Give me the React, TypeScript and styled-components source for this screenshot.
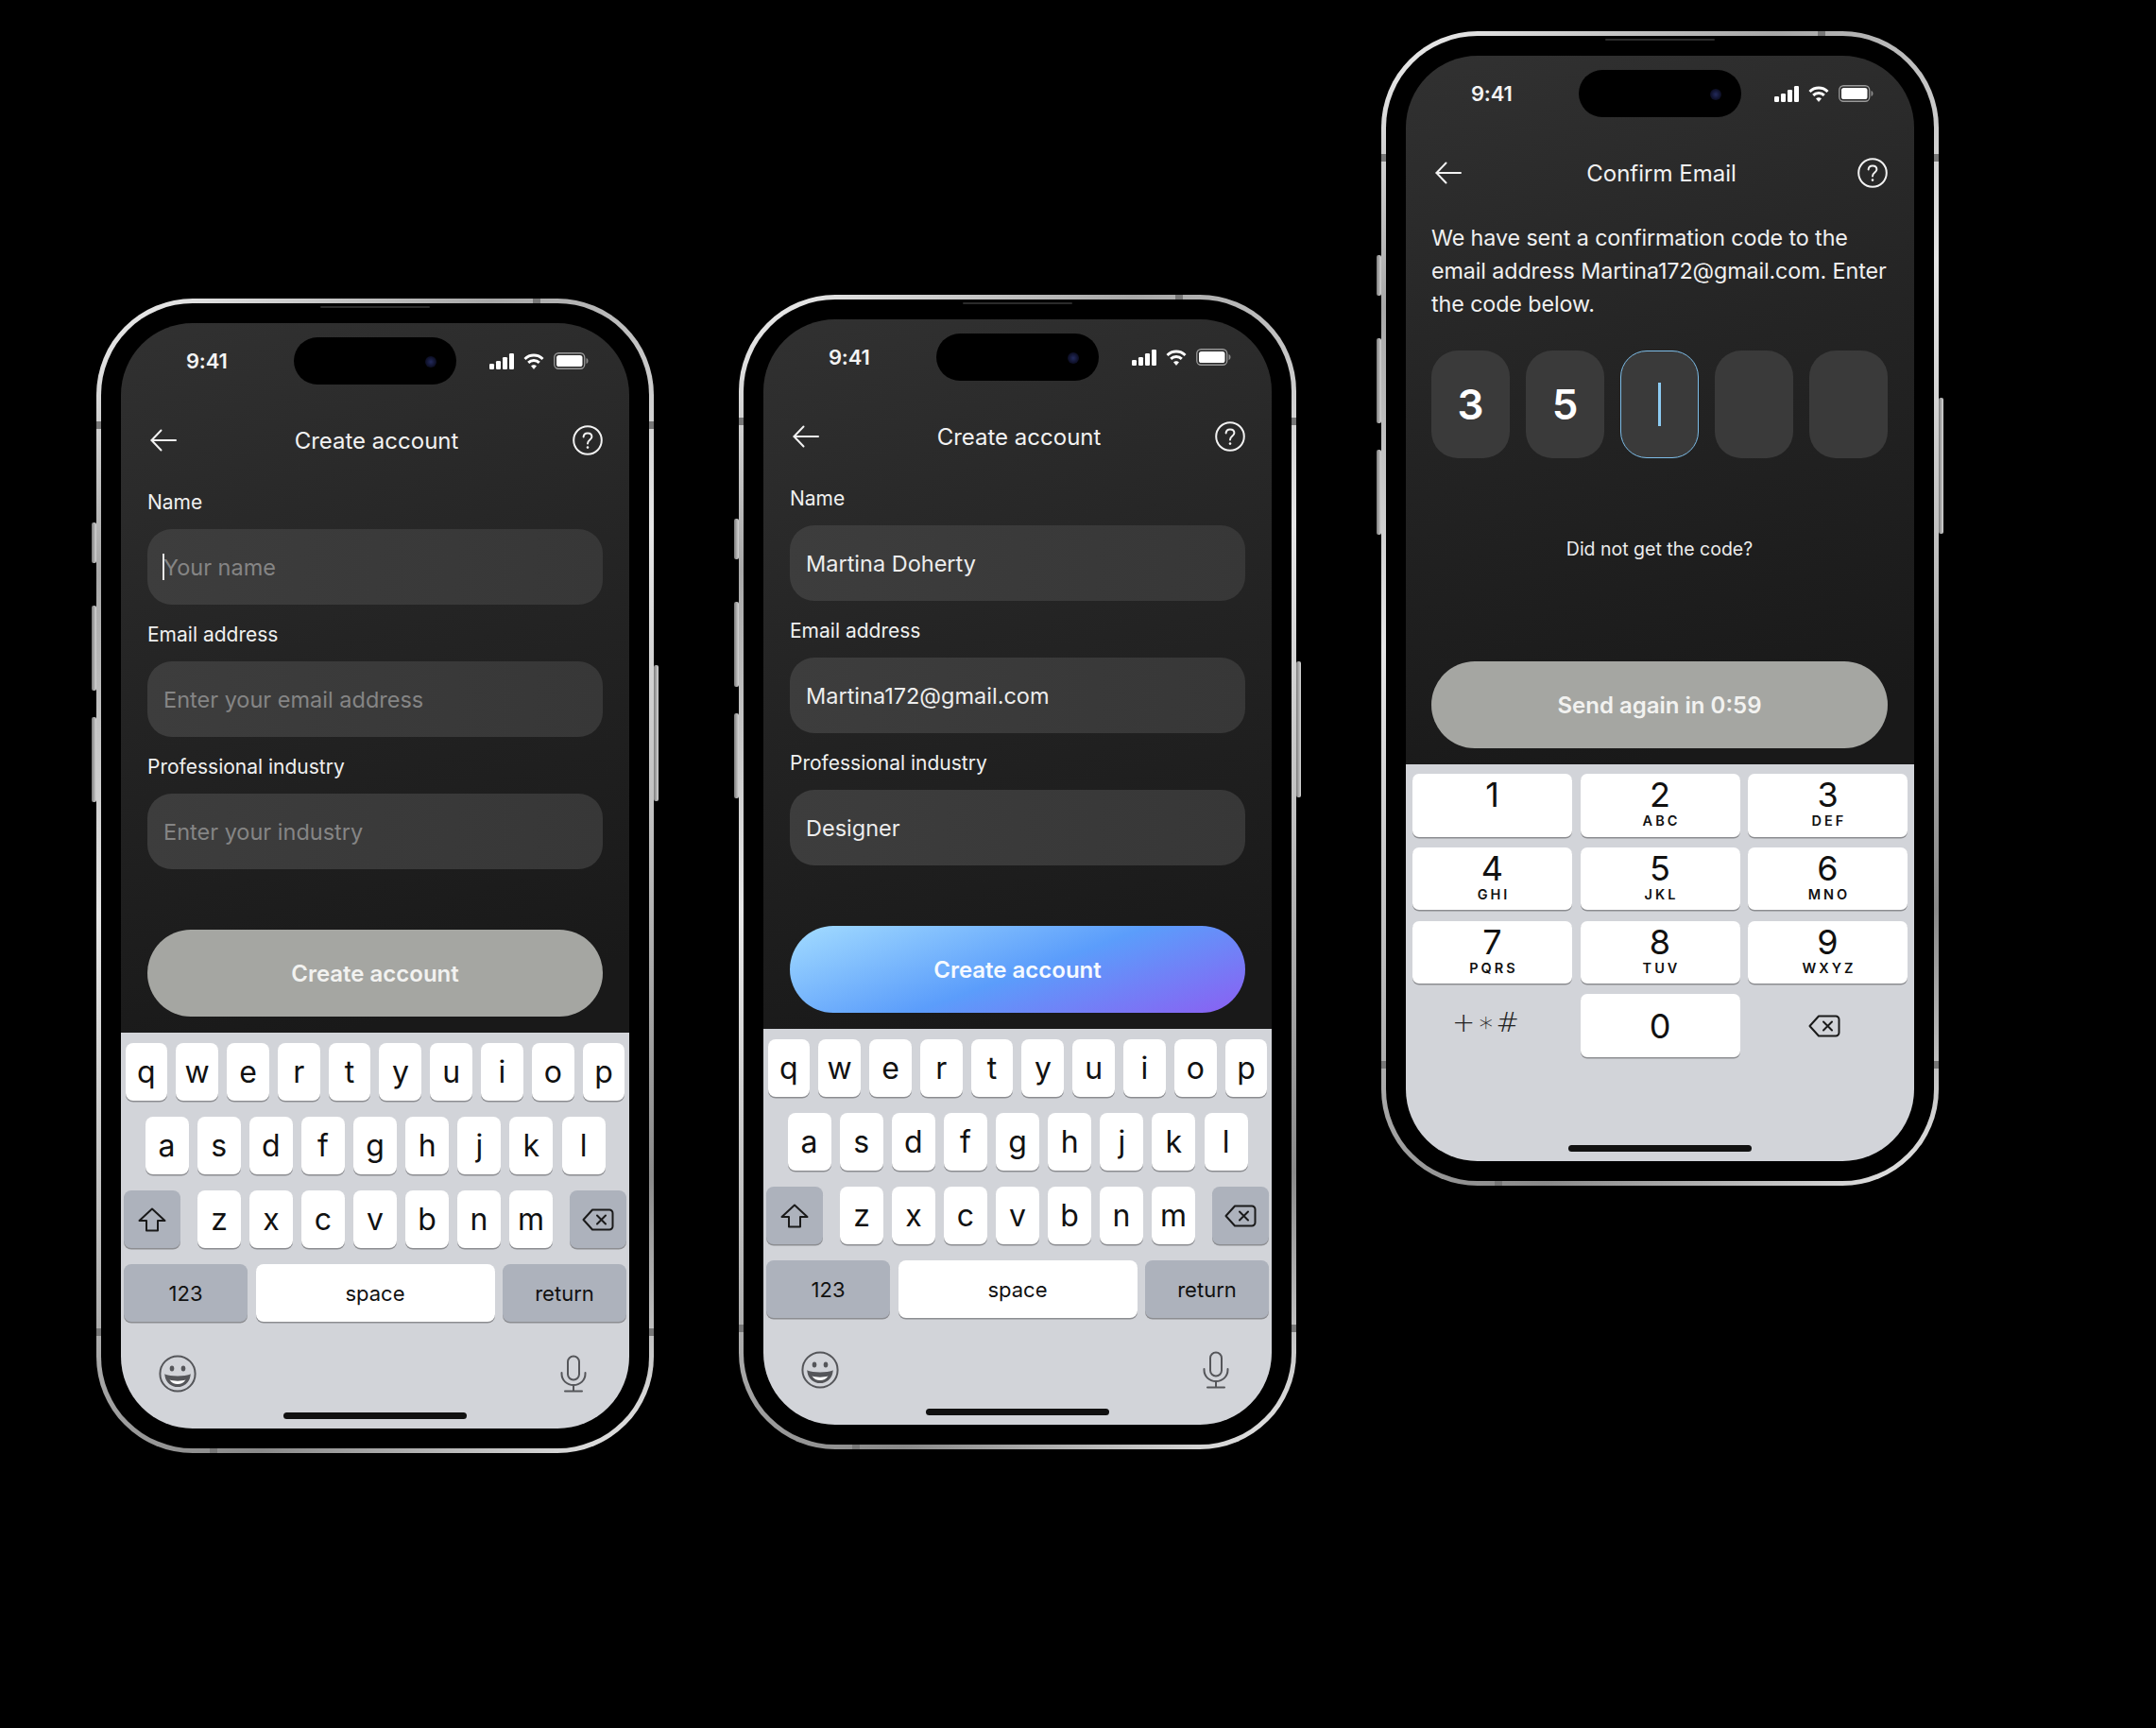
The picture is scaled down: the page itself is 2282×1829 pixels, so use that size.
import { createGlobalStyle } from 'styled-components'
import styled from 'styled-components'

import type { FC, ReactNode } from 'react'

const GlobalStyle = createGlobalStyle`
  html, body {
    margin: 0;
    padding: 0;
    background: #000;
  }
  body {
    width: 2282px;
    height: 1829px;
    overflow: hidden;
    font-family: Inter, 'Liberation Sans', sans-serif;
  }
  * {
    box-sizing: border-box;
  }
`

const Stage = styled.div`
  display: flex;
  align-items: flex-start;
  gap: 90px;
  width: 2282px;
  height: 1829px;
  padding-left: 102px;
  background: #000;
`

const Frame = styled.div<{ $top: number }>`
  position: relative;
  flex: none;
  width: 590px;
  height: 1222px;
  margin-top: ${(p) => p.$top}px;
  padding: 5px;
  border-radius: 102px;
  background: linear-gradient(
    145deg,
    #f2f2f2 0%,
    #a8a8a8 18%,
    #e6e6e6 40%,
    #bdbdbd 60%,
    #8a8a8a 82%,
    #ececec 100%
  );
`

const Bezel = styled.div`
  height: 100%;
  padding: 21px 21px 21px;
  border-radius: 97px;
  background: #000;
`

const Screen = styled.div`
  display: flex;
  flex-direction: column;
  height: 1170px;
  overflow: hidden;
  border-radius: 76px;
  color: #fff;
  background: linear-gradient(165deg, #313131 0%, #242424 30%, #191919 62%, #191919 100%);
`

const SideButton = styled.div<{ $side: 'left' | 'right'; $y: number; $h: number }>`
  position: absolute;
  ${(p) => p.$side}: -5px;
  top: ${(p) => p.$y}px;
  width: 5px;
  height: ${(p) => p.$h}px;
  border-radius: 2px;
  background: linear-gradient(90deg, #7c7c7c, #d6d6d6);
`

const Speaker = styled.div`
  position: absolute;
  top: 8px;
  left: 237px;
  width: 116px;
  height: 2px;
  border-radius: 1px;
  background: #2b2b2b;
`

const Band = styled.div<{ $x: number; $y: number; $wide?: boolean }>`
  position: absolute;
  left: ${(p) => p.$x}px;
  top: ${(p) => p.$y}px;
  width: ${(p) => (p.$wide ? 5 : 8)}px;
  height: ${(p) => (p.$wide ? 8 : 5)}px;
  background: #777;
`

const StatusBar = styled.div`
  display: grid;
  grid-template-columns: 183px 172px 1fr;
  flex: none;
  height: 50px;
  margin-top: 15px;
`

const Time = styled.div`
  align-self: center;
  padding-left: 69px;
  font-size: 22px;
  font-weight: 600;
  letter-spacing: -0.2px;
  color: #f4f4f4;
`

const Island = styled.div`
  position: relative;
  border-radius: 25px;
  background: #000;
`

const Lens = styled.div`
  position: absolute;
  top: 20px;
  left: 139px;
  width: 12px;
  height: 12px;
  border-radius: 50%;
  background: radial-gradient(circle, #232a5c 0%, #10132e 55%, #05060f 100%);
`

const StatusIcons = styled.div`
  display: flex;
  align-items: center;
  gap: 10px;
  padding-left: 35px;
`

const Header = styled.div`
  display: grid;
  grid-template-columns: 1fr auto 1fr;
  align-items: center;
  flex: none;
  height: 60px;
  margin-top: 29px;
  padding: 0 28px 0 31px;
`

const HelpWrap = styled.div`
  display: flex;
  justify-content: flex-end;
`

const Title = styled.div`
  font-size: 24px;
  font-weight: 400;
  color: #f2f2f2;
`

const Form = styled.div`
  display: flex;
  flex: 1;
  flex-direction: column;
  padding: 22px 28px 17px;
`

const Label = styled.div`
  height: 28px;
  margin-bottom: 14px;
  font-size: 21px;
  line-height: 28px;
  color: #f0f0f0;
`

const Field = styled.div<{ $filled?: boolean }>`
  position: relative;
  display: flex;
  align-items: center;
  height: 80px;
  margin-bottom: 18px;
  padding-left: 17px;
  border-radius: 26px;
  font-size: 23.5px;
  color: ${(p) => (p.$filled ? '#ededed' : '#858585')};
  background: linear-gradient(95deg, #3d3d3d 0%, #373737 100%);
`

const Caret = styled.span`
  position: absolute;
  left: 16px;
  top: 26px;
  width: 2px;
  height: 28px;
  background: #e8e8e8;
`

const Cta = styled.div<{ $active?: boolean }>`
  display: flex;
  flex: none;
  align-items: center;
  justify-content: center;
  height: 92px;
  margin-top: auto;
  border-radius: 46px;
  font-size: 24px;
  font-weight: 600;
  color: ${(p) => (p.$active ? '#f6faff' : '#f2f2f0')};
  background: ${(p) =>
    p.$active
      ? 'linear-gradient(160deg, #a3dcff 0%, #5b9dfb 52%, #8b5ff2 100%)'
      : '#a5a6a2'};
`

const Intro = styled.p`
  margin: 21px 28px 32px 27px;
  font-size: 23.3px;
  line-height: 35px;
  letter-spacing: -0.1px;
  color: #f0f0f0;
`

const CodeRow = styled.div`
  display: grid;
  grid-template-columns: repeat(5, 83px);
  justify-content: space-between;
  flex: none;
  padding: 0 28px 0 27px;
`

const CodeBox = styled.div<{ $active?: boolean }>`
  display: flex;
  align-items: center;
  justify-content: center;
  height: 114px;
  border: 1.5px solid ${(p) => (p.$active ? '#7dbde8' : 'transparent')};
  border-radius: 28px;
  font-size: 44px;
  font-weight: 600;
  color: #fff;
  background: #3a3a3a;
`

const CodeCaret = styled.span`
  width: 3px;
  height: 46px;
  background: #8ccbf2;
`

const Footer = styled.div`
  display: flex;
  flex: 1;
  flex-direction: column;
  padding: 0 28px 17px 27px;
`

const Hint = styled.div`
  margin-top: auto;
  margin-bottom: 23px;
  font-size: 19.5px;
  line-height: 28px;
  text-align: center;
  color: #ececec;
`

const Keyboard = styled.div<{ $h: number }>`
  display: flex;
  flex: none;
  flex-direction: column;
  height: ${(p) => p.$h}px;
  padding-top: 11px;
  background: #d2d4d9;
`

const KeyRow = styled.div<{ $pad?: number }>`
  display: flex;
  justify-content: space-between;
  height: 61px;
  margin-bottom: 17px;
  padding: 0 ${(p) => p.$pad ?? 3}px;
`

const LetterGroup = styled.div`
  display: flex;
  gap: 9px;
`

const Key = styled.div<{ $w?: number; $muted?: boolean; $small?: boolean }>`
  display: flex;
  flex: ${(p) => (p.$w ? `none` : '1')};
  align-items: center;
  justify-content: center;
  width: ${(p) => (p.$w ? `${p.$w}px` : 'auto')};
  margin: 0 ${(p) => (p.$w ? 0 : 4.5)}px;
  border-radius: 8px;
  font-size: ${(p) => (p.$small ? 22 : 32)}px;
  color: #111;
  background: ${(p) => (p.$muted ? '#adb2bc' : '#fff')};
  box-shadow: 0 1.5px 0 #8c8d91;
`

const BottomIcons = styled.div`
  display: flex;
  align-items: center;
  justify-content: space-between;
  height: 40px;
  margin-top: 18px;
  padding: 0 45px 0 40px;
`

const HomeBar = styled.div`
  flex: none;
  align-self: center;
  width: 194px;
  height: 7px;
  margin-top: auto;
  margin-bottom: 10px;
  border-radius: 4px;
  background: #111;
`

const PadGrid = styled.div`
  display: grid;
  grid-template-columns: repeat(3, 169px);
  grid-auto-rows: 66.5px;
  gap: 11.3px 8.5px;
  padding: 0 7px;
  margin-top: -1px;
`

const PadKey = styled.div<{ $solo?: boolean }>`
  display: flex;
  flex-direction: column;
  align-items: center;
  justify-content: ${(p) => (p.$solo ? 'center' : 'flex-start')};
  padding-top: ${(p) => (p.$solo ? 0 : 4)}px;
  border-radius: 7px;
  color: #111;
  background: #fff;
  box-shadow: 0 1.5px 0 #8c8d91;
`

const PadDigit = styled.div`
  font-size: 36px;
  line-height: 36px;
`

const PadLetters = styled.div`
  margin-top: 3px;
  font-size: 14.5px;
  font-weight: 600;
  line-height: 14px;
  letter-spacing: 3px;
  padding-left: 3px;
`

const PadSymbols = styled.div`
  display: flex;
  align-items: center;
  justify-content: center;
  padding: 0 12px 8px 0;
  font-family: 'DejaVu Sans', sans-serif;
  font-size: 29px;
  font-weight: 300;
  letter-spacing: 2px;
  color: #222;
`

const PadDelete = styled.div`
  display: flex;
  align-items: center;
  justify-content: center;
  padding-right: 7px;
`

const SignalIcon = () => (
  <svg width="26" height="17" viewBox="0 0 26 17" fill="#fff">
    <rect x="0" y="11" width="5" height="6" rx="1.2" />
    <rect x="7" y="8" width="5" height="9" rx="1.2" />
    <rect x="14" y="4" width="5" height="13" rx="1.2" />
    <rect x="21" y="0" width="5" height="17" rx="1.2" />
  </svg>
)

const WifiIcon = () => (
  <svg width="22" height="17" viewBox="0 0 22 17" fill="none" stroke="#fff" strokeWidth="3">
    <path d="M1.5 6 C6.8 0.8 15.2 0.8 20.5 6" />
    <path d="M5.2 9.8 C8.4 6.8 13.6 6.8 16.8 9.8" />
    <path d="M11 16.5 L8.4 13.4 C9.9 12.2 12.1 12.2 13.6 13.4 Z" fill="#fff" strokeWidth="0.6" />
  </svg>
)

const BatteryIcon = () => (
  <svg width="37" height="18" viewBox="0 0 37 18">
    <rect x="0.75" y="0.75" width="32" height="16.5" rx="4.5" fill="none" stroke="#9a9a9a" strokeWidth="1.3" />
    <rect x="3" y="3" width="27.5" height="12" rx="2.6" fill="#fff" />
    <path d="M34.5 6 C36 6.5 36.5 7.6 36.5 9 C36.5 10.4 36 11.5 34.5 12 Z" fill="#8a8a8a" />
  </svg>
)

const BackIcon = () => (
  <svg width="28" height="24" viewBox="0 0 28 24" fill="none" stroke="#f2f2f2" strokeWidth="2" strokeLinecap="round" strokeLinejoin="round">
    <path d="M27 12 H1.5" />
    <path d="M11.5 1.5 L1.5 12 L11.5 22.5" />
  </svg>
)

const HelpIcon = () => (
  <svg width="32" height="32" viewBox="0 0 32 32" fill="none" stroke="#f2f2f2" strokeWidth="2">
    <circle cx="16" cy="16" r="14.8" />
    <path d="M11.6 12.4 C11.8 9.8 13.6 8.4 16 8.4 C18.6 8.4 20.4 10 20.4 12.2 C20.4 15.4 16 15.6 16 19.4" strokeLinecap="round" />
    <circle cx="16" cy="23.6" r="1.3" fill="#f2f2f2" stroke="none" />
  </svg>
)

const ShiftIcon = () => (
  <svg width="30" height="26" viewBox="0 0 30 26" fill="none" stroke="#1a1a1a" strokeWidth="2" strokeLinejoin="round">
    <path d="M15 1.5 L28.5 14 H21 V24.5 H9 V14 H1.5 Z" />
  </svg>
)

const DeleteIcon = () => (
  <svg width="34" height="24" viewBox="0 0 34 24" fill="none" stroke="#1a1a1a" strokeWidth="2" strokeLinejoin="round" strokeLinecap="round">
    <path d="M11 1.5 H29 A3.5 3.5 0 0 1 32.5 5 V19 A3.5 3.5 0 0 1 29 22.5 H11 L1.5 12 Z" />
    <path d="M16 7.5 L25 16.5 M25 7.5 L16 16.5" />
  </svg>
)

const EmojiIcon = () => (
  <svg width="40" height="40" viewBox="0 0 40 40" fill="none" stroke="#55565a" strokeWidth="2">
    <circle cx="20" cy="20" r="18.6" />
    <ellipse cx="14" cy="14.5" rx="2.3" ry="3" fill="#55565a" stroke="none" />
    <ellipse cx="26" cy="14.5" rx="2.3" ry="3" fill="#55565a" stroke="none" />
    <path d="M7.5 22 C12 24 28 24 32.5 22 C31.5 29 26 33 20 33 C14 33 8.5 29 7.5 22 Z" fill="#55565a" />
    <path d="M11.5 26.5 C16 28 24 28 28.5 26.5 C26.5 29.5 23.5 31 20 31 C16.5 31 13.5 29.5 11.5 26.5 Z" fill="#fff" stroke="none" />
  </svg>
)

const MicIcon = () => (
  <svg width="28" height="40" viewBox="0 0 28 40" fill="none" stroke="#55565a" strokeWidth="2" strokeLinecap="round">
    <rect x="8" y="1.5" width="12" height="25" rx="6" />
    <path d="M1.5 19 V20 C1.5 27 7 32 14 32 C21 32 26.5 27 26.5 20 V19" />
    <path d="M14 32 V38.5 M5 38.5 H23" />
  </svg>
)

const Phone: FC<{ top: number; children: ReactNode }> = ({ top, children }) => (
  <Frame $top={top}>
    <SideButton $side="left" $y={237} $h={43} />
    <SideButton $side="left" $y={325} $h={90} />
    <SideButton $side="left" $y={443} $h={90} />
    <SideButton $side="right" $y={388} $h={144} />
    <Speaker />
    <Band $x={462} $y={0} />
    <Band $x={120} $y={1217} />
    <Band $x={0} $y={130} $wide />
    <Band $x={585} $y={130} $wide />
    <Band $x={0} $y={1090} $wide />
    <Band $x={585} $y={1090} $wide />
    <Bezel>
      <Screen>
        <StatusBar>
          <Time>9:41</Time>
          <Island>
            <Lens />
          </Island>
          <StatusIcons>
            <SignalIcon />
            <WifiIcon />
            <BatteryIcon />
          </StatusIcons>
        </StatusBar>
        {children}
      </Screen>
    </Bezel>
  </Frame>
)

const NavHeader: FC<{ title: string }> = ({ title }) => (
  <Header>
    <BackIcon />
    <Title>{title}</Title>
    <HelpWrap>
      <HelpIcon />
    </HelpWrap>
  </Header>
)

const renderKeys = (letters: string, width?: number) =>
  letters.split('').map((letter) => (
    <Key key={letter} $w={width}>
      {letter}
    </Key>
  ))

const LetterKeyboard = () => (
  <Keyboard $h={419}>
    <KeyRow $pad={-1.5}>{renderKeys('qwertyuiop')}</KeyRow>
    <KeyRow $pad={25.5}>{renderKeys('asdfghjkl', 46)}</KeyRow>
    <KeyRow>
      <Key $w={60} $muted>
        <ShiftIcon />
      </Key>
      <LetterGroup>{renderKeys('zxcvbnm', 46)}</LetterGroup>
      <Key $w={60} $muted>
        <DeleteIcon />
      </Key>
    </KeyRow>
    <KeyRow>
      <Key $w={131} $muted $small>
        123
      </Key>
      <Key $w={253} $small>
        space
      </Key>
      <Key $w={131} $muted $small>
        return
      </Key>
    </KeyRow>
    <BottomIcons>
      <EmojiIcon />
      <MicIcon />
    </BottomIcons>
    <HomeBar />
  </Keyboard>
)

const padKeys = [
  ['1', ''],
  ['2', 'ABC'],
  ['3', 'DEF'],
  ['4', 'GHI'],
  ['5', 'JKL'],
  ['6', 'MNO'],
  ['7', 'PQRS'],
  ['8', 'TUV'],
  ['9', 'WXYZ'],
]

const NumberKeyboard = () => (
  <Keyboard $h={420}>
    <PadGrid>
      {padKeys.map(([digit, letters]) => (
        <PadKey key={digit}>
          <PadDigit>{digit}</PadDigit>
          {letters && <PadLetters>{letters}</PadLetters>}
        </PadKey>
      ))}
      <PadSymbols>+∗#</PadSymbols>
      <PadKey $solo>
        <PadDigit>0</PadDigit>
      </PadKey>
      <PadDelete>
        <DeleteIcon />
      </PadDelete>
    </PadGrid>
    <HomeBar />
  </Keyboard>
)

const fieldsOf = (name: string, email: string, industry: string, filled: boolean, caret: boolean) => (
  <>
    <Label>Name</Label>
    <Field $filled={filled}>
      {caret && <Caret />}
      {name}
    </Field>
    <Label>Email address</Label>
    <Field $filled={filled}>{email}</Field>
    <Label>Professional industry</Label>
    <Field $filled={filled}>{industry}</Field>
  </>
)

export default function App() {
  return (
    <>
      <GlobalStyle />
      <Stage>
        <Phone top={316}>
          <NavHeader title="Create account" />
          <Form>
            {fieldsOf('Your name', 'Enter your email address', 'Enter your industry', false, true)}
            <Cta>Create account</Cta>
          </Form>
          <LetterKeyboard />
        </Phone>
        <Phone top={312}>
          <NavHeader title="Create account" />
          <Form>
            {fieldsOf('Martina Doherty', 'Martina172@gmail.com', 'Designer', true, false)}
            <Cta $active>Create account</Cta>
          </Form>
          <LetterKeyboard />
        </Phone>
        <Phone top={33}>
          <NavHeader title="Confirm Email" />
          <Intro>
            We have sent a confirmation code to the email address Martina172@gmail.com. Enter the
            code below.
          </Intro>
          <CodeRow>
            <CodeBox>3</CodeBox>
            <CodeBox>5</CodeBox>
            <CodeBox $active>
              <CodeCaret />
            </CodeBox>
            <CodeBox />
            <CodeBox />
          </CodeRow>
          <Footer>
            <Hint>Did not get the code?</Hint>
            <Cta as="div">Send again in 0:59</Cta>
          </Footer>
          <NumberKeyboard />
        </Phone>
      </Stage>
    </>
  )
}
